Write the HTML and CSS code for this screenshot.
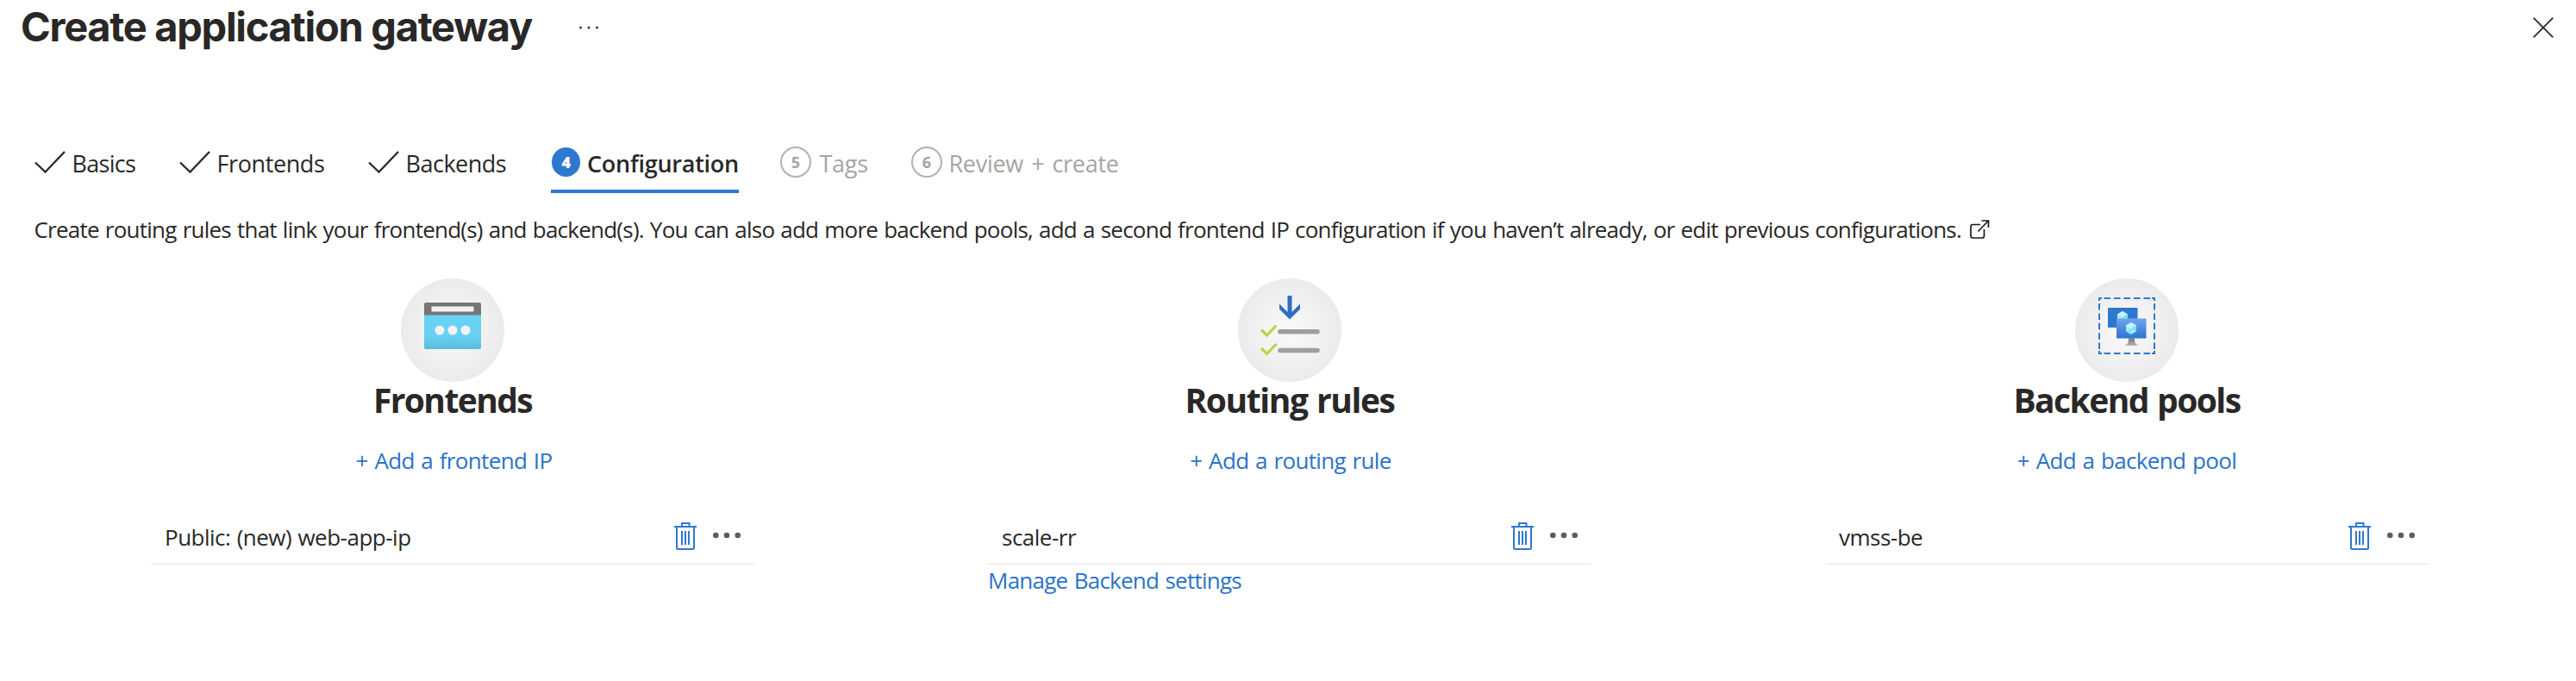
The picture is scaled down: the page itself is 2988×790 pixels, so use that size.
FILE: index.html
```html
<!DOCTYPE html>
<html lang="en">
<head>
<meta charset="utf-8">
<title>Create application gateway</title>
<link rel="stylesheet" href="styles.css">
</head>
<body>
<svg class="defs" aria-hidden="true">
  <symbol id="check" viewBox="0 0 36 26"><path d="M1 13.5 12.5 24.5 35 1" fill="none" stroke="#292827" stroke-width="2.3"/></symbol>
  <symbol id="trash" viewBox="0 0 26 32"><path d="M0 5H26M9 4.500V1H17.500V4.500M3 5.500V29.500Q3 31 4.500 31H21.500Q23 31 23 29.500V5.500M9 10V26M13 10V26M17 10V26" fill="none" stroke="#2f78d0" stroke-width="2"/></symbol>
  <symbol id="dots" viewBox="0 0 32 8"><g fill="#5f5d5b"><circle cx="3.300" cy="4" r="3.300"/><circle cx="16" cy="4" r="3.300"/><circle cx="28.700" cy="4" r="3.300"/></g></symbol>
</svg>

<header class="header">
  <h1 class="title">Create application gateway</h1>
  <svg class="title-more" viewBox="0 0 24 4"><g fill="#3b3a39"><circle cx="2.500" cy="2" r="1.500"/><circle cx="12" cy="2" r="1.500"/><circle cx="21.500" cy="2" r="1.500"/></g></svg>
  <svg class="close" viewBox="0 0 24 24"><path d="M.7.7 23.300 23.300M23.300.7.7 23.300" stroke="#323130" stroke-width="1.900"/></svg>
</header>

<nav class="tabs">
  <a class="tab"><svg class="check"><use href="#check"/></svg><span class="basics">Basics</span></a>
  <a class="tab"><svg class="check"><use href="#check"/></svg><span class="frontends">Frontends</span></a>
  <a class="tab"><svg class="check"><use href="#check"/></svg><span class="backends">Backends</span></a>
  <a class="tab active"><b class="step">4</b><span>Configuration</span></a>
  <a class="tab disabled"><b class="step">5</b><span class="tags">Tags</span></a>
  <a class="tab disabled"><b class="step">6</b><span class="review">Review + create</span></a>
</nav>

<p class="intro"><span>Create routing rules that link your frontend(s) and backend(s). You can also add more backend pools, add a second frontend IP configuration if you haven’t already, or edit previous configurations.</span>
  <svg class="external" viewBox="0 0 24 22"><path d="M12 5.500H3.500Q1 5.500 1 8V18.500Q1 21 3.500 21H14Q16.500 21 16.500 18.500V11M9.500 13.500 21 1.500M13.500 1H21.500V9" fill="none" stroke="#1b1a19" stroke-width="1.700"/></svg>
</p>

<main class="columns">
  <section class="column front">
    <div class="disc">
      <svg viewBox="0 0 120 120">
        <defs><linearGradient id="cyan" x2="0" y2="1"><stop offset=".6" stop-color="#67d2f3"/><stop offset="1" stop-color="#5abbd9"/></linearGradient></defs>
        <path d="M27 42H93V80Q93 82 91 82H29Q27 82 27 80Z" fill="url(#cyan)"/>
        <path d="M29 28H91Q93 28 93 30V42.500H27V30Q27 28 29 28Z" fill="#767676"/>
        <rect x="35.500" y="32.500" width="49" height="6" rx="1" fill="#f2f2f2"/>
        <g fill="#f2f2f2"><circle cx="45" cy="60" r="5.500"/><circle cx="60" cy="60" r="5.500"/><circle cx="75" cy="60" r="5.500"/></g>
      </svg>
    </div>
    <h2 class="heading">Frontends</h2>
    <a class="add">+ Add a frontend IP</a>
    <div class="row"><span class="name">Public: (new) web-app-ip</span><svg class="trash"><use href="#trash"/></svg><svg class="dots"><use href="#dots"/></svg></div>
  </section>

  <section class="column rules">
    <div class="disc">
      <svg viewBox="0 0 120 120" fill="none">
        <path d="M60 20V43" stroke="#2a6fc4" stroke-width="5"/>
        <path d="M48 29.500 60 41.500 72 29.500V35.500L60 47.500 48 35.500Z" fill="#2a6fc4"/>
        <path d="M27 59.500 33.500 66 44.500 54.500M27 81 33.500 87.500 44.500 76" stroke="#b9d54a" stroke-width="3.200"/>
        <path d="M49 61.800H92M49 83.500H92" stroke="#9d9e9f" stroke-width="5.600" stroke-linecap="round"/>
      </svg>
    </div>
    <h2 class="heading">Routing rules</h2>
    <a class="add">+ Add a routing rule</a>
    <div class="row"><span class="name">scale-rr</span><svg class="trash"><use href="#trash"/></svg><svg class="dots"><use href="#dots"/></svg></div>
    <a class="manage">Manage Backend settings</a>
  </section>

  <section class="column pools">
    <div class="disc">
      <svg viewBox="0 0 120 120">
        <defs>
          <linearGradient id="screen" x2="0" y2="1"><stop stop-color="#6fa4ee"/><stop offset="1" stop-color="#2b74cd"/></linearGradient>
          <linearGradient id="stand" x2="0" y2="1"><stop stop-color="#767676"/><stop offset="1" stop-color="#b8b8b8"/></linearGradient>
          <symbol id="cube" viewBox="0 0 12 14"><path d="M6 0 12 3.500V10.500L6 14 0 10.500V3.500Z" fill="#a5ebfd"/><path d="M6 0 12 3.500 6 7 0 3.500Z" fill="#c8f2ff"/><path d="M12 3.500V10.500L6 7Z" fill="#78defa"/><path d="M6 7V14L0 10.500Z" fill="#84e2fb"/></symbol>
        </defs>
        <g stroke="#2f78d0" stroke-width="2" fill="none">
          <path d="M28 26V23H31M89 23H92V26M92 84V87H89M31 87H28V84"/>
          <path d="M33.500 23H89M33.500 87H89" stroke-dasharray="7.500 4"/>
          <path d="M28 29V83M92 29V83" stroke-dasharray="7.500 3.900"/>
        </g>
        <rect x="38" y="34" width="34.500" height="23" rx="1" fill="#2f76cf"/>
        <use href="#cube" x="49" y="38" width="12" height="14"/>
        <path d="M62 69.500H69C69 75 70 76.500 74 78H57C61 76.500 62 75 62 69.500Z" fill="url(#stand)"/>
        <rect x="48" y="46.500" width="34.500" height="23" rx="1" fill="url(#screen)"/>
        <use href="#cube" x="59" y="51" width="12" height="14"/>
      </svg>
    </div>
    <h2 class="heading">Backend pools</h2>
    <a class="add">+ Add a backend pool</a>
    <div class="row"><span class="name">vmss-be</span><svg class="trash"><use href="#trash"/></svg><svg class="dots"><use href="#dots"/></svg></div>
  </section>
</main>
</body>
</html>
```
FILE: styles.css
```css
* { box-sizing: border-box; }
body {
  margin: 0;
  background: #fff;
  color: #292827;
  font: 400 26px/36px "Open Sans", "Noto Sans", sans-serif;
}
svg { display: block; flex: none; }
.defs { display: none; }

.header { display: flex; height: 171px; padding: 1px 26px 0 24px; }
.title {
  margin: 0;
  font: 700 47px/60px Inter, sans-serif;
  letter-spacing: -1.3px;
  white-space: nowrap;
}
.title-more { width: 24px; height: 4px; margin: 29px 0 0 54px; }
.close { width: 24px; height: 24px; margin: 19px 0 0 auto; }

.tabs {
  display: grid;
  grid-template-columns: 168px 219px 212px 266px 152px auto;
  justify-content: start;
  height: 77px;
  padding-left: 40px;
  font-size: 27px;
  line-height: 38px;
}
.tab { display: flex; justify-self: start; height: 53px; gap: 7.5px; white-space: nowrap; }
.check { width: 36px; height: 26px; margin-top: 4px; }
.basics { letter-spacing: -.7px; }
.frontends { letter-spacing: -.4px; }
.backends { letter-spacing: -.5px; }
.tags { margin-left: 2px; letter-spacing: -.3px; }
.review { letter-spacing: -.3px; word-spacing: 2.5px; }
.step {
  width: 36px;
  height: 36px;
  margin-top: -1px;
  border: 2px solid #b3b2b1;
  border-radius: 50%;
  font-size: 18px;
  line-height: 32px;
  text-align: center;
}
.active {
  width: 218px;
  border-bottom: 4px solid #2f78d0;
  font-weight: 600;
  letter-spacing: -.25px;
}
.active .step {
  width: 34px;
  height: 34px;
  margin: 0 0 0 1px;
  border: 0;
  background: #2f78d0;
  color: #fff;
  line-height: 34px;
}
.disabled { color: #a6a5a4; }

.intro { display: flex; margin: 0; padding-left: 39.5px; height: 75px; letter-spacing: -.76px; word-spacing: 1px; white-space: nowrap; }
.external { width: 24px; height: 22px; margin: 7px 0 0 10px; }

.columns { display: grid; grid-template-columns: repeat(3, 700px); column-gap: 271px; padding-left: 175px; }
.column { display: flex; flex-direction: column; align-items: center; }
.disc { width: 120px; height: 120px; border-radius: 50%; background: radial-gradient(circle closest-side, #fafafa, #ebebeb); }
.heading { margin: 1px 0 0; font-size: 39px; font-weight: 700; line-height: 40px; letter-spacing: -1.4px; word-spacing: 1.5px; }
.front .heading { letter-spacing: -1.6px; }
.pools .heading { letter-spacing: -1.55px; }
.add, .manage { color: #2b73c8; }
.add { margin: 32px 0 45px; letter-spacing: -.65px; word-spacing: 1.5px; }
.front .add { margin-left: 3px; }
.rules .add { margin-left: 2px; }
.manage { align-self: flex-start; letter-spacing: -.75px; word-spacing: 1.2px; }
.row { display: flex; width: 700px; height: 58px; padding: 8px 16px 0; border-bottom: 2px solid #f0f0f0; letter-spacing: -.5px; word-spacing: 1px; }
.trash { width: 26px; height: 32px; margin: 1px 19px 0 auto; }
.dots { width: 32px; height: 8px; margin-top: 12px; }
```
